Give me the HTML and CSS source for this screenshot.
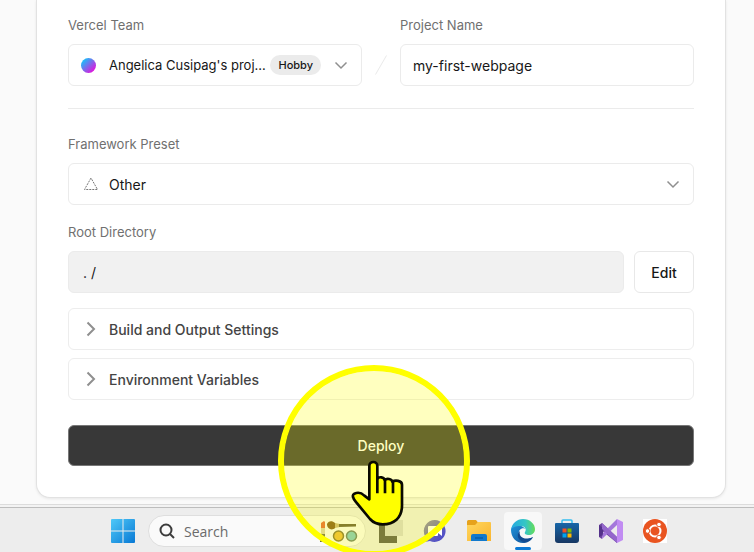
FILE: index.html
```
<!DOCTYPE html>
<html lang="en">
<head>
  <meta charset="utf-8">
  <title>New Project</title>
  <link rel="stylesheet" href="styles.css">
</head>
<body>
  <main class="page">
    <form class="card">
      <div class="name-row">
        <div class="field">
          <label for="team">Vercel Team</label>
          <div class="select-box">
            <span class="avatar"></span>
            <select id="team" class="control has-icon team">
              <option>Angelica Cusipag's proj...</option>
            </select>
            <span class="badge">Hobby</span>
            <svg class="chevron" viewBox="0 0 14 14"><path d="M1.500 4.500 7 10l5.500-5.500"/></svg>
          </div>
        </div>
        <svg class="slash" viewBox="0 0 14 22"><path d="M1.500 20.500 12.500 1.500"/></svg>
        <div class="field">
          <label for="project">Project Name</label>
          <input id="project" class="control" value="my-first-webpage">
        </div>
      </div>

      <hr>

      <div class="field">
        <label for="preset">Framework Preset</label>
        <div class="select-box">
          <svg class="preset-icon" viewBox="0 0 16 14"><path d="M8 1 1.500 12.500h13z"/></svg>
          <select id="preset" class="control has-icon">
            <option>Other</option>
          </select>
          <svg class="chevron" viewBox="0 0 14 14"><path d="M1.500 4.500 7 10l5.500-5.500"/></svg>
        </div>
      </div>

      <div class="field root-field">
        <label for="root">Root Directory</label>
        <div class="root-row">
          <input id="root" class="control readonly" value=". /" readonly>
          <button type="button" class="edit">Edit</button>
        </div>
      </div>

      <div class="sections">
        <button type="button" class="section">
          <svg class="arrow" viewBox="0 0 10 16"><path d="M1.500 1.500 8 8l-6.500 6.500"/></svg>
          Build and Output Settings
        </button>
        <button type="button" class="section">
          <svg class="arrow" viewBox="0 0 10 16"><path d="M1.500 1.500 8 8l-6.500 6.500"/></svg>
          Environment Variables
        </button>
      </div>

      <button type="button" class="deploy">Deploy</button>
    </form>
  </main>

  <div class="window-edge"></div>

  <footer class="taskbar">
    <button class="task" aria-label="Start">
      <svg width="24" height="24" viewBox="0 0 24 24">
        <defs><linearGradient id="win" x1="0" y1="0" x2="1" y2="1" gradientUnits="objectBoundingBox"><stop offset="0" stop-color="#4fc9f8"/><stop offset="1" stop-color="#0878d4"/></linearGradient></defs>
        <path fill="url(#win)" d="M1 0h10.500v11.500H0V1a1 1 0 0 1 1-1zM12.500 0H23a1 1 0 0 1 1 1v10.500H12.500zM0 12.500h11.500V24H1a1 1 0 0 1-1-1zM12.500 12.500H24V23a1 1 0 0 1-1 1H12.500z"/>
      </svg>
    </button>

    <div class="search">
      <svg width="16" height="16" viewBox="0 0 16 16" fill="none" stroke="#3c3c3c" stroke-width="2"><circle cx="7" cy="7" r="5.500"/><path d="m11 11 4 4"/></svg>
      <input type="text" placeholder="Search" aria-label="Search">
      <!-- lipstick, brush, colour pots -->
      <svg width="38" height="22" viewBox="0 0 38 22">
        <path fill="#e2603c" d="M1 8V3l3-2 1 1v6z"/>
        <path fill="#d8cfae" d="M1 8h4v6H1z"/>
        <path fill="#69694f" d="M0 14h5v8H0z"/>
        <path fill="#7d551f" d="M7 4c1-3 5-4 8-1l2 2-2 3c-3 3-8 1-8-4z"/>
        <path fill="#c8b37c" d="m15 3 5 1v3l-5 1z"/>
        <path fill="#5f563a" d="m19 4 17 0v2.500L19 7z"/>
        <circle cx="18.500" cy="16" r="5" fill="#eab73e" stroke="#7b6c36" stroke-width="1.500"/>
        <circle cx="31.500" cy="16" r="5" fill="#77c6c8" stroke="#61786a" stroke-width="1.500"/>
      </svg>
    </div>

    <button class="task" aria-label="Task view">
      <svg width="24" height="24" viewBox="0 0 24 24"><path fill="#4f4f4f" d="M0 6h18v18H0z"/><path fill="#d4d4d4" d="M6 1h18v16H6z"/></svg>
    </button>
    <button class="task" aria-label="Chat">
      <svg width="24" height="24" viewBox="0 0 24 24">
        <defs><linearGradient id="chat" x1="0" y1="0" x2="1" y2="1"><stop offset="0" stop-color="#8b86a4"/><stop offset="1" stop-color="#4443cf"/></linearGradient></defs>
        <path fill="url(#chat)" d="M12 1a11 11 0 1 1-5 21l-6 1 1-6A11 11 0 0 1 12 1z"/>
        <path fill="#fff" d="M6 7h8a1 1 0 0 1 1 1v2l4-3v10l-4-3v2a1 1 0 0 1-1 1H6a1 1 0 0 1-1-1V8a1 1 0 0 1 1-1z"/>
      </svg>
    </button>
    <button class="task" aria-label="Files">
      <svg width="24" height="22" viewBox="0 0 24 22">
        <defs><linearGradient id="folder" x1="0" y1="0" x2="1" y2="1"><stop offset="0" stop-color="#ffd75e"/><stop offset="1" stop-color="#f9b42f"/></linearGradient></defs>
        <path fill="#e6a21c" d="M0 7V1.500A1.500 1.500 0 0 1 1.500 0H9l2 2.500L9 5z"/>
        <path fill="url(#folder)" d="M0 5h8l3-3h12a1 1 0 0 1 1 1v18H0z"/>
        <path fill="#1179cd" d="M4 21v-5a2 2 0 0 1 2-2h12a2 2 0 0 1 2 2v5z"/>
        <path stroke="#075eaa" stroke-width="1.500" d="M8 18h8"/>
      </svg>
    </button>
    <button class="task active" aria-label="Edge">
      <svg width="26" height="26" viewBox="0 0 26 26">
        <defs>
          <linearGradient id="edgeTop"><stop offset="0" stop-color="#24a8e2"/><stop offset=".6" stop-color="#35c6c4"/><stop offset="1" stop-color="#66dd57"/></linearGradient>
          <linearGradient id="edgeLow" x1="0" y1="0" x2="1" y2="1"><stop offset="0" stop-color="#2094dc"/><stop offset="1" stop-color="#104a91"/></linearGradient>
        </defs>
        <path fill="url(#edgeLow)" d="M1 12c0-3 4-6 9-5l6 4c-4-2-8 1-7 5 1 5 7 7 14 3-2 4-6 6-10 6C6 25 1 19 1 12z"/>
        <path fill="#12498f" d="M10 13c-2 6 5 10 13 6-2 3-5 5-8 5-6 0-10-7-5-11z"/>
        <path fill="url(#edgeTop)" d="M1 12C2 5 7 1 13 1c7 0 12 5 12 10 0 4-3 6-6 6s-5-1-4-3c2-3 0-6-5-6-4 0-8 1-9 4z"/>
      </svg>
    </button>
    <button class="task" aria-label="Store">
      <svg width="24" height="24" viewBox="0 0 24 24">
        <defs><linearGradient id="store" x1="0" y1="0" x2="0" y2="1"><stop offset="0" stop-color="#1766a8"/><stop offset="1" stop-color="#173763"/></linearGradient></defs>
        <path fill="none" stroke="#35bdf0" stroke-width="1.500" d="M7 5V2a1 1 0 0 1 1-1h8a1 1 0 0 1 1 1v3"/>
        <path fill="url(#store)" d="M1 4h22a1 1 0 0 1 1 1v16a3 3 0 0 1-3 3H3a3 3 0 0 1-3-3V5a1 1 0 0 1 1-1z"/>
        <path fill="#f25022" d="M7.500 9.500h4v4h-4z"/><path fill="#7fba00" d="M12.500 9.500h4v4h-4z"/>
        <path fill="#00a4ef" d="M7.500 14.500h4v4h-4z"/><path fill="#ffb900" d="M12.500 14.500h4v4h-4z"/>
      </svg>
    </button>
    <button class="task" aria-label="Visual Studio">
      <svg width="24" height="24" viewBox="0 0 24 24">
        <path fill="#6d45a0" d="m0 6 3-2 15 14v6L4 12.500V16l-1 4-3-2z"/>
        <path fill="#53318a" d="m0 6 4 3v7l-4 2z"/>
        <path fill="#a477db" d="m3 20 15-14V0L4 14z"/>
        <path fill="#9467cc" d="m3 4 15 14v6L3 10z"/>
        <path fill="#c18cf2" d="m18 0 6 3v18l-6 3z"/>
      </svg>
    </button>
    <button class="task" aria-label="Ubuntu">
      <svg width="24" height="24" viewBox="0 0 24 24">
        <path fill="#fff" d="M0 0h24v24H0z"/>
        <circle cx="12" cy="12" r="12" fill="#e95420"/>
        <circle cx="12" cy="12" r="5.500" fill="none" stroke="#fff" stroke-width="2"/>
        <g fill="#fff" stroke="#e95420"><circle cx="4.500" cy="12" r="2.300"/><circle cx="16" cy="5.500" r="2.300"/><circle cx="16" cy="18.500" r="2.300"/></g>
      </svg>
    </button>
  </footer>

  <!-- click highlight -->
  <div class="spotlight"></div>
  <svg class="pointer" viewBox="240 300 165 201">
    <path fill="#ff0" stroke="#0a0a00" stroke-width="8" stroke-linejoin="round" d="M298 418V318c0-16 24-16 24 0v38c5-7 20-5 22 4 6-6 21-4 23 5 8-5 29-4 29 9v62c0 39-25 57-58 57-17 0-29-6-38-16l-43-52c-8-10-12-20-4-24 13-6 24 0 30 6z"/>
    <path fill="none" stroke="#0a0a00" stroke-width="8" d="M322 352v48M345 360v40M369 365v35"/>
  </svg>
</body>
</html>
```
FILE: styles.css
```
* {
  box-sizing: border-box;
}
body {
  position: relative;
  margin: 0;
  overflow: hidden;
  background: #fafafa;
  color: #171717;
  font-family: Inter, "Liberation Sans", sans-serif;
  font-size: 14px;
}
button, input, select {
  font: inherit;
  color: inherit;
}
svg {
  display: block;
  flex: none;
}

/* project form */
.page {
  padding: 0 28px 6px 36px;
}
.card {
  padding: 15px 31px 31px;
  background: #fff;
  border: 1px solid #e2e2e2;
  border-top: 0;
  border-radius: 0 0 14px 14px;
  box-shadow: 0 1px 3px rgba(0, 0, 0, .08);
}
.name-row {
  display: flex;
  align-items: flex-end;
}
.field {
  display: flex;
  flex-direction: column;
  flex: 1;
  gap: 9px;
}
label {
  color: #707070;
  font-size: 13px;
  line-height: 20px;
}
.control {
  width: 100%;
  height: 42px;
  padding: 0 12px;
  background: #fff;
  border: 1px solid #ebebeb;
  border-radius: 6px;
  appearance: none;
  outline: 0;
}
.has-icon {
  padding-left: 40px;
}
.team {
  font-size: 13px;
}
.select-box {
  position: relative;
}
.avatar, .preset-icon, .badge, .chevron {
  position: absolute;
  top: 0;
  bottom: 0;
  margin: auto;
  pointer-events: none;
}
.avatar {
  left: 13px;
  width: 15px;
  height: 15px;
  border-radius: 50%;
  background: linear-gradient(135deg, #1cbcfa 15%, #e016dc 85%);
}
.preset-icon {
  left: 15px;
  width: 16px;
  height: 14px;
  fill: none;
  stroke: #777;
  stroke-dasharray: 2 1;
}
.badge {
  right: 41px;
  height: 20px;
  padding: 0 8px;
  border-radius: 10px;
  background: #ebebeb;
  font-size: 11px;
  font-weight: 500;
  line-height: 20px;
}
.chevron {
  right: 14px;
  width: 14px;
  height: 14px;
  fill: none;
  stroke: #8f8f8f;
  stroke-width: 1.500;
}
.slash {
  width: 14px;
  height: 22px;
  margin: 0 12px 10px;
  fill: none;
  stroke: #eaeaea;
}
hr {
  margin: 22px 0 25px;
  border: 0;
  border-top: 1px solid #ebebeb;
}
.root-field {
  margin-top: 17px;
}
.root-row {
  display: flex;
  gap: 10px;
}
.readonly {
  flex: 1;
  padding: 0 14px;
  background: #f1f1f1;
}
.edit {
  width: 60px;
  height: 42px;
  padding: 0;
  background: #fff;
  border: 1px solid #e8e8e8;
  border-radius: 6px;
  font-weight: 500;
}
.sections {
  display: flex;
  flex-direction: column;
  gap: 8px;
  margin: 15px 0 25px;
}
.section {
  display: flex;
  align-items: center;
  gap: 13px;
  height: 42px;
  padding: 0 17px;
  background: #fff;
  border: 1px solid #ededed;
  border-radius: 6px;
  color: #444;
  font-weight: 500;
}
.arrow {
  width: 10px;
  height: 16px;
  fill: none;
  stroke: #8f8f8f;
  stroke-width: 2;
}
.deploy {
  display: block;
  width: 100%;
  height: 41px;
  background: #383838;
  border: 1px solid #777;
  border-radius: 6px;
  color: #fff;
  font-weight: 500;
}

/* bottom of the browser window */
.window-edge {
  height: 3px;
  background: #f3f3f3;
  border-top: 1px solid #dcdcdc;
}

/* taskbar */
.taskbar {
  display: flex;
  align-items: center;
  gap: 6px;
  height: 45px;
  padding: 2px 0 0 104px;
  background: #ededed;
  border-top: 1px solid #bdbdbd;
}
.task {
  display: flex;
  align-items: center;
  justify-content: center;
  flex: none;
  width: 38px;
  height: 38px;
  padding: 0;
  background: none;
  border: 0;
  border-radius: 4px;
}
.active {
  position: relative;
  background: #f8f8f8;
}
.active::after {
  content: "";
  position: absolute;
  bottom: 0;
  left: 11px;
  width: 16px;
  height: 3px;
  border-radius: 2px;
  background: #0b78d4;
}
.search {
  display: flex;
  align-items: center;
  gap: 9px;
  width: 218px;
  height: 32px;
  padding: 0 7px 0 10px;
  background: #fafafa;
  border: 1px solid #dedede;
  border-radius: 16px;
}
.search input {
  flex: 1;
  min-width: 0;
  padding: 0;
  background: none;
  border: 0;
  outline: 0;
  font-family: "Open Sans", "Noto Sans", sans-serif;
}
.search input::placeholder {
  color: #6b6b6b;
}

/* click highlight */
.spotlight {
  position: absolute;
  top: 365px;
  left: calc(50% - 99px);
  width: 192px;
  height: 192px;
  border: 6px solid #ff0;
  border-radius: 50%;
  background: rgba(255, 255, 0, .25);
  background-clip: padding-box;
  pointer-events: none;
}
.pointer {
  position: absolute;
  top: 460px;
  left: calc(50% - 27px);
  width: 55px;
  height: 67px;
  pointer-events: none;
}
```
